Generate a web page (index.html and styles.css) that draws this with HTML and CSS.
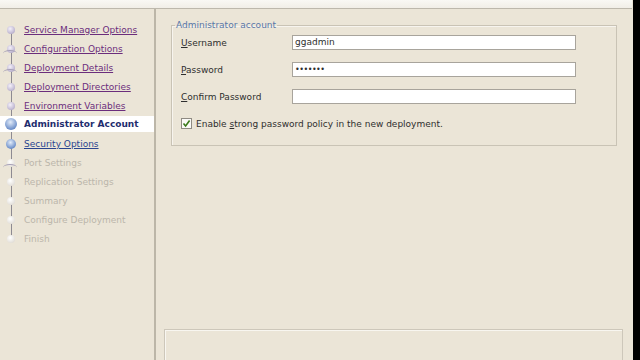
FILE: index.html
```html
<!DOCTYPE html>
<html>
<head>
<meta charset="utf-8">
<link rel="stylesheet" href="styles.css">
</head>
<body>
<div class="topbar"></div>
<div class="main">
  <nav class="nav">
    <div class="rail"></div>
    <div class="item visited"><span class="node"></span><a>Service Manager Options</a></div>
    <div class="item visited"><span class="node fork"></span><a>Configuration Options</a></div>
    <div class="item visited"><span class="node fork"></span><a>Deployment Details</a></div>
    <div class="item visited"><span class="node"></span><a>Deployment Directories</a></div>
    <div class="item visited"><span class="node"></span><a>Environment Variables</a></div>
    <div class="item current"><span class="node blue"></span><span class="label">Administrator Account</span></div>
    <div class="item next"><span class="node blue small"></span><a>Security Options</a></div>
    <div class="item disabled"><span class="node pale fork"></span><span class="label">Port Settings</span></div>
    <div class="item disabled"><span class="node pale"></span><span class="label">Replication Settings</span></div>
    <div class="item disabled"><span class="node pale"></span><span class="label">Summary</span></div>
    <div class="item disabled"><span class="node pale"></span><span class="label">Configure Deployment</span></div>
    <div class="item disabled"><span class="node pale"></span><span class="label">Finish</span></div>
  </nav>
  <section class="content">
    <fieldset class="group">
      <legend>Administrator account</legend>
      <div class="form">
        <label><u>U</u>sername</label>
        <div class="field">ggadmin</div>
        <label><u>P</u>assword</label>
        <div class="field dots">•••••••</div>
        <label><u>C</u>onfirm Password</label>
        <div class="field"></div>
      </div>
      <div class="check">
        <span class="box"><svg width="9" height="9" viewBox="0 0 9 9"><path d="M1.5 4.5 L3.6 7 L7.6 1.5" fill="none" stroke="#3a7a1a" stroke-width="1.6"/></svg></span>
        <span>Enable <u>s</u>trong password policy in the new deployment.</span>
      </div>
    </fieldset>
    <div class="spacer"></div>
    <div class="bottom"></div>
  </section>
  <div class="edge"></div>
</div>
</body>
</html>
```
FILE: styles.css
```css
html, body {
  margin: 0;
  padding: 0;
  width: 640px;
  height: 360px;
  overflow: hidden;
  background: #ebe5d7;
  font-family: "DejaVu Sans", sans-serif;
  font-size: 9px;
  color: #2e2e2e;
}
.topbar {
  height: 8px;
  background: linear-gradient(#f9f8f4, #f1eee7);
  border-bottom: 1px solid #bdb8ac;
  margin-right: 8px;
}
.main {
  display: flex;
  height: 351px;
}
.nav {
  position: relative;
  width: 156px;
  border-right: 2px solid #bcb6a8;
  padding-top: 11px;
  box-sizing: border-box;
  flex: none;
}
.rail {
  position: absolute;
  left: 11px;
  top: 19px;
  height: 212px;
  width: 1px;
  background: #8d8a92;
}
.item {
  position: relative;
  height: 19px;
  display: flex;
  align-items: center;
  padding-left: 24px;
  white-space: nowrap;
}
.item a {
  text-decoration: underline;
  font-size: 9px;
}
.item .label { font-size: 9px; }
.visited a { color: #6b2d7c; }
.next a { color: #2a4590; }
.current {
  background: #ffffff;
  height: 16px;
  margin: 1px 0 2px 0;
}
.current .label {
  font-weight: bold;
  color: #1f2d6e;
}
.disabled .label { color: #bbb6ab; }
.node {
  position: absolute;
  left: 7px;
  top: 50%;
  margin-top: -4px;
  width: 8px;
  height: 8px;
  border-radius: 50%;
  background: radial-gradient(circle at 40% 35%, #f4f0fa, #a59bbd);
}
.node.fork::after {
  content: "";
  position: absolute;
  left: -4px;
  top: 5px;
  width: 14px;
  height: 6px;
  border-top: 1px solid #a69fb6;
  border-radius: 50% 50% 0 0;
}
.node.blue {
  left: 5px;
  margin-top: -6px;
  width: 12px;
  height: 12px;
  background: radial-gradient(circle at 45% 35%, #e2ecfa, #6d8fc9 70%);
}
.node.blue.small {
  left: 6px;
  margin-top: -5px;
  width: 10px;
  height: 10px;
}
.node.pale {
  background: radial-gradient(circle at 40% 35%, #ffffff, #d8d3cb);
}
.content {
  flex: 1;
  display: flex;
  flex-direction: column;
  padding: 11px 16px 0 15px;
  min-width: 0;
}
.group {
  margin: 0;
  border: 1px solid #c9c3b5;
  box-shadow: inset 1px 1px 0 #f7f4ee;
  padding: 5px 40px 16px 9px;
}
.group legend {
  color: #5877a8;
  padding: 0 1px;
  margin-left: -6px;
  font-size: 9px;
}
.form {
  display: grid;
  grid-template-columns: 111px 1fr;
  row-gap: 12px;
  align-items: center;
}
.form label { color: #2e2e2e; }
.field {
  height: 13px;
  line-height: 13px;
  background: #ffffff;
  border: 1px solid #a8a49c;
  padding-left: 2px;
  font-size: 9px;
}
.field.dots {
  letter-spacing: -0.5px;
  font-size: 8px;
}
.check {
  display: flex;
  align-items: center;
  gap: 4px;
  margin-top: 14px;
  font-size: 9px;
}
.box {
  width: 9px;
  height: 9px;
  border: 1px solid #8f8b83;
  background: #fbfaf7;
  display: flex;
}
.spacer { flex: 1; }
.bottom {
  height: 30px;
  margin-left: -7px;
  margin-right: -6px;
  border: 1px solid #cdc7ba;
  border-bottom: none;
  box-shadow: inset 1px 1px 0 #f8f6f0;
  flex: none;
}
.edge {
  width: 7px;
  background: #000;
  flex: none;
  margin-top: -9px;
}
```
